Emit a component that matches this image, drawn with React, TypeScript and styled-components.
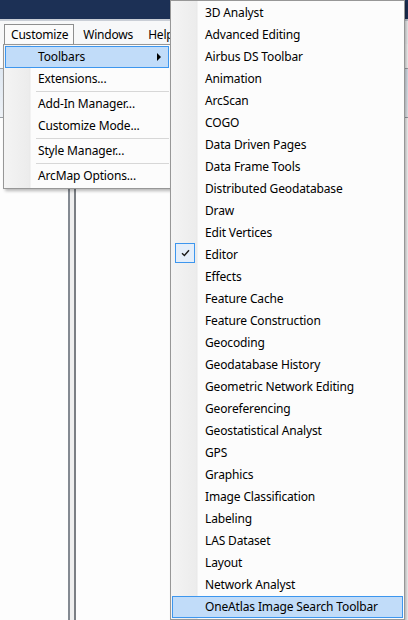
import React from "react";
import styled, { createGlobalStyle } from "styled-components";

const Global = createGlobalStyle`
  html, body { margin: 0; padding: 0; background: #fcfcfc; }
  body { font-family: "Noto Sans", "Open Sans", sans-serif; font-size: 12px; color: #000; }
`;

const Screen = styled.div`
  position: relative;
  width: 408px;
  height: 620px;
  overflow: hidden;
  display: flex;
  flex-direction: column;
  background: #fcfcfc;
`;

const TitleBar = styled.div`
  height: 19px;
  background: #1c3055;
  border-bottom: 2px solid #c9ced6;
`;

const MenuBar = styled.div`
  height: 23px;
  display: flex;
  align-items: flex-end;
  padding-left: 4px;
  background: #f7f8f9;
`;

const MenuTitle = styled.div<{ $open?: boolean }>`
  height: 20px;
  padding: 0 5px 0 6px;
  display: flex;
  align-items: center;
  box-sizing: border-box;
  border: 1px solid ${(p) => (p.$open ? "#8e8f8f" : "transparent")};
  border-bottom: none;
  background: ${(p) => (p.$open ? "#fbfbfb" : "transparent")};
  margin-right: 2px;
  letter-spacing: -0.2px;
`;

const ToolStrip = styled.div`
  height: 24px;
  background: #fcfcfc;
  border-bottom: 1px solid #a0a4a8;
`;

const ToolStripLow = styled.div`
  height: 48px;
  background: linear-gradient(#dfe8f2, #eef2f7);
  border-bottom: 1px solid #9aa0a6;
`;

const Workspace = styled.div`
  flex: 1;
  display: flex;
`;

const Pane = styled.div<{ $w?: number }>`
  width: ${(p) => (p.$w ? `${p.$w}px` : "auto")};
  flex: ${(p) => (p.$w ? "none" : "1")};
  background: #fdfdfd;
`;

const Splitter = styled.div`
  width: 4px;
  background: #efefef;
  border-left: 2px solid #848a92;
  border-right: 2px solid #7b7f84;
`;

/* ---- drop-down menus ---- */

const Menu = styled.div<{ $left: number; $top: number; $width: number }>`
  position: absolute;
  left: ${(p) => p.$left}px;
  top: ${(p) => p.$top}px;
  width: ${(p) => p.$width}px;
  box-sizing: border-box;
  border: 1px solid #979797;
  padding: 1px;
  background: linear-gradient(
    to right,
    #f4f4f4 0px,
    #ececec 25px,
    #e8e8e8 26px,
    #fcfcfc 27px,
    #fcfcfc 100%
  );
  box-shadow: 2px 2px 3px rgba(0, 0, 0, 0.28);
`;

const Item = styled.div<{ $active?: boolean }>`
  position: relative;
  height: 22px;
  box-sizing: border-box;
  display: flex;
  align-items: center;
  padding-left: 32px;
  padding-bottom: 1px;
  border: 1px solid ${(p) => (p.$active ? "#3d96ee" : "transparent")};
  background: ${(p) => (p.$active ? "#c1dcf9" : "transparent")};
  white-space: nowrap;
  letter-spacing: -0.15px;
`;

const Separator = styled.div`
  height: 3px;
  margin-left: 31px;
  display: flex;
  align-items: center;
  &::after {
    content: "";
    flex: 1;
    height: 1px;
    background: #d7d7d7;
  }
`;

const Arrow = styled.span`
  position: absolute;
  right: 7px;
  top: 6px;
  width: 0;
  height: 0;
  border-top: 4px solid transparent;
  border-bottom: 4px solid transparent;
  border-left: 4px solid #000;
`;

const CheckBox = styled.span`
  position: absolute;
  left: 2px;
  top: -2px;
  width: 20px;
  height: 20px;
  box-sizing: border-box;
  border: 1px solid #3d96ee;
  background: #e4eefa;
  display: flex;
  align-items: center;
  justify-content: center;
`;

const Check = () => (
  <svg width="9" height="8" viewBox="0 0 9 8">
    <path d="M1 4.2 L3.4 6.5 L8 1.2" fill="none" stroke="#1a1a1a" strokeWidth="1.4" />
  </svg>
);

const toolbars = [
  "3D Analyst",
  "Advanced Editing",
  "Airbus DS Toolbar",
  "Animation",
  "ArcScan",
  "COGO",
  "Data Driven Pages",
  "Data Frame Tools",
  "Distributed Geodatabase",
  "Draw",
  "Edit Vertices",
  "Editor",
  "Effects",
  "Feature Cache",
  "Feature Construction",
  "Geocoding",
  "Geodatabase History",
  "Geometric Network Editing",
  "Georeferencing",
  "Geostatistical Analyst",
  "GPS",
  "Graphics",
  "Image Classification",
  "Labeling",
  "LAS Dataset",
  "Layout",
  "Network Analyst",
  "OneAtlas Image Search Toolbar",
];

export default function App() {
  return (
    <>
      <Global />
      <Screen>
        <TitleBar />
        <MenuBar>
          <MenuTitle $open>Customize</MenuTitle>
          <MenuTitle>Windows</MenuTitle>
          <MenuTitle>Help</MenuTitle>
        </MenuBar>
        <ToolStrip />
        <ToolStripLow />
        <Workspace>
          <Pane $w={68} />
          <Splitter />
          <Pane />
        </Workspace>

        <Menu $left={3} $top={44} $width={168}>
          <Item $active>
            Toolbars
            <Arrow />
          </Item>
          <Item>Extensions...</Item>
          <Separator />
          <Item>Add-In Manager...</Item>
          <Item>Customize Mode...</Item>
          <Separator />
          <Item>Style Manager...</Item>
          <Separator />
          <Item>ArcMap Options...</Item>
        </Menu>

        <Menu $left={170} $top={0} $width={235}>
          {toolbars.map((name) => (
            <Item key={name} $active={name === "OneAtlas Image Search Toolbar"}>
              {name === "Editor" && (
                <CheckBox>
                  <Check />
                </CheckBox>
              )}
              {name}
            </Item>
          ))}
        </Menu>
      </Screen>
    </>
  );
}
